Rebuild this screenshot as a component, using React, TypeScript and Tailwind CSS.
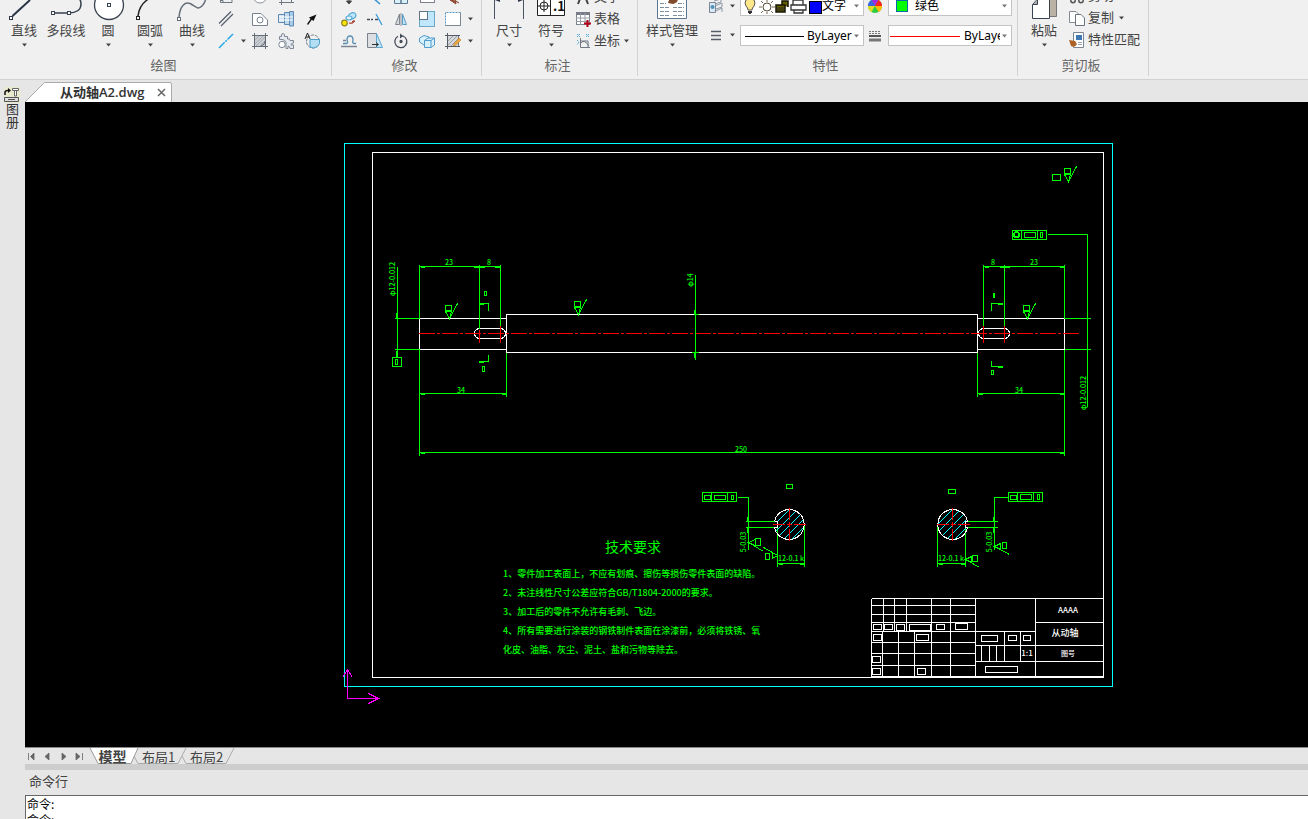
import type { ReactNode } from "react";

const DRAW_TOOLS: { label: string; menu: boolean; icon: ReactNode }[] = [
  {
    label: "直线",
    menu: true,
    icon: (
      <g stroke="#2b3546" fill="none">
        <path d="M9.500 16L27 0" strokeWidth="2" />
        <rect x="6.500" y="16.500" width="3" height="3" fill="#fff" />
      </g>
    ),
  },
  {
    label: "多段线",
    menu: false,
    icon: (
      <g stroke="#39424f" fill="none">
        <path d="M8 13H24C31 13 36 10 36 4Q36 -2 30 -5" strokeWidth="1.500" />
        <rect x="6.500" y="11.500" width="3" height="3" fill="#fff" />
        <rect x="22.500" y="11.500" width="3" height="3" fill="#fff" />
      </g>
    ),
  },
  {
    label: "圆",
    menu: true,
    icon: (
      <g stroke="#39424f">
        <circle cx="22" cy="5" r="14.500" fill="#fff" strokeWidth="1.300" />
        <rect x="20.500" y="3.500" width="3" height="3" fill="#fff" />
      </g>
    ),
  },
  {
    label: "圆弧",
    menu: true,
    icon: (
      <g stroke="#222" fill="none">
        <path d="M9 16Q10 6 18 0L24 -4" strokeWidth="1.500" />
        <rect x="7.500" y="16.500" width="3" height="3" fill="#fff" />
      </g>
    ),
  },
  {
    label: "曲线",
    menu: true,
    icon: (
      <g stroke="#666e79" fill="none">
        <path d="M8 17C9 6 14 1 20 4C25 7 27 10 31 6Q34 3 35 -2" strokeWidth="1.500" />
        <rect x="6.500" y="17.500" width="3" height="3" fill="#fff" />
      </g>
    ),
  },
];

const DRAW_ROWS: { name: string; icon: ReactNode }[][] = [
  [
    { name: "矩形", icon: <path d="M2.500 0V13.500H14V4M2 11.500H5V14" fill="none" stroke="#6f7682" /> },
    { name: "椭圆", icon: <ellipse cx="8" cy="9" rx="6" ry="5" fill="#fff" stroke="#8a909a" /> },
    { name: "构造线", icon: <path d="M3.500 5V16M13.500 8V14M1 13.500H16" fill="none" stroke="#6f7682" /> },
  ],
  [
    { name: "双线", icon: <path d="M1 12.500L13 .5M3 15L15 3" fill="none" stroke="#596070" strokeWidth="1.300" /> },
    {
      name: "区域",
      icon: (
        <g fill="#fff" stroke="#7b8390">
          <path d="M.5 2.500H9L15.500 9V14.500H.5Z" />
          <circle cx="8" cy="9" r="3" />
        </g>
      ),
    },
    {
      name: "轴",
      icon: (
        <g stroke="#5d89b3">
          <path d="M.5 3.500H6.500V11.500H.5Z" fill="#d5e5f3" />
          <path d="M6.500 1.500H11.500V13.500H6.500Z" fill="#c2daee" />
          <path d="M11.500 .5H15.500V15H11.500Z" fill="#a7cbe8" />
          <path d="M1 6H15M1 9H15" stroke="#fff" />
        </g>
      ),
    },
    { name: "箭头", icon: <path d="M12.500 3.500L9.500 10L7.800 8.700L4 14L3 13L6.500 8L5 6.500Z" fill="#111" /> },
  ],
  [
    { name: "中心线", icon: <path d="M1 15L15 1" fill="none" stroke="#29a9e6" strokeWidth="1.500" strokeDasharray="8 1 2 1" /> },
    {
      name: "填充",
      icon: (
        <g stroke="#7c828c">
          <rect x="2.500" y="2.500" width="11" height="11" fill="#c9ccd1" />
          <path d="M3 7L7 3M3 11L11 3M4 13L13 4M8 13L13 8" stroke="#a8acb3" />
          <path d="M2.500 0V16M13.500 0V16M0 2.500H16M0 13.500H16M9 13Q13 12 13 8" fill="none" stroke="#666c76" />
        </g>
      ),
    },
    {
      name: "零件库",
      icon: (
        <g fill="#e6eaf0" stroke="#7d8793">
          <path d="M1.500 6.500V3.500H3.500Q3 .5 5 .5Q7 .5 6.500 3.500H9.500V6Q12 5 12 7.500H15.500V10Q13 10 13 12H15.500V15.500H12Q12 13 10 13V15.500H8V9.500Q7 6.500 4 6.500Z" />
          <circle cx="4" cy="11.500" r="3.200" fill="#fff" />
        </g>
      ),
    },
    {
      name: "局部放大",
      icon: (
        <g fill="none" stroke="#707985">
          <circle cx="9" cy="8.500" r="6.500" strokeDasharray="3 1" />
          <path d="M6 6.500H15.500A6.500 6.500 0 0 1 6 14Z" fill="#b4def3" stroke="#4d9fc8" />
          <path d="M1 6L3.500 0L6 6M2 4H5" stroke="#222" />
        </g>
      ),
    },
  ],
];

const MODIFY_ROWS: { name: string; icon: ReactNode }[][] = [
  [
    { name: "移动", icon: <path d="M8 4V14M5.500 12H10.500L8 15Z" fill="#444" stroke="#444" /> },
    { name: "修剪", icon: <path d="M6 9L13 15" stroke="#3692d1" strokeWidth="1.500" /> },
    { name: "阵列", icon: <path d="M1.500 4.500H8V14.500H1.500ZM8 4.500H14.500V14.500H8Z" fill="#d9effa" stroke="#5c7790" /> },
    { name: "拉伸", icon: <rect x="1.500" y="2.500" width="14" height="11" fill="#fff" stroke="#7c828c" /> },
    { name: "清理", icon: <path d="M7 8L11 9L10 12L14 14M5 11L10 12L11 15Z" fill="#a75538" stroke="#8b4530" /> },
  ],
  [
    {
      name: "复制",
      icon: (
        <g strokeWidth="1.200">
          <ellipse cx="11" cy="5" rx="4" ry="3" fill="#bfe6fa" stroke="#58a9d4" transform="rotate(-30 11 5)" />
          <ellipse cx="8" cy="7" rx="3" ry="2" fill="#dff3fc" stroke="#58a9d4" />
          <circle cx="3.500" cy="12" r="2.800" fill="#ffe500" stroke="#8c8326" />
          <path d="M8 12Q13 13 13 9M11 10.500H14" fill="none" stroke="#a83b30" />
        </g>
      ),
    },
    {
      name: "延伸",
      icon: <g strokeWidth="1.300"><path d="M0 8.500H6M8 8.500H12" stroke="#444b55" strokeDasharray="3 1" /><path d="M9 3L15 14" stroke="#3d9ada" /></g>,
    },
    {
      name: "镜像",
      icon: <g><path d="M6.500 3V13.500H2.500Z" fill="#d7dade" stroke="#7e858f" /><path d="M9.500 3V13.500H13.500Z" fill="#bfe2f5" stroke="#5b9dc5" /><path d="M8 2V15" stroke="#8a929c" /></g>,
    },
    {
      name: "缩放",
      icon: <g><rect x=".5" y=".5" width="15" height="15" fill="#bfe6fa" stroke="#6aa7c8" /><rect x=".5" y=".5" width="8" height="8" fill="#fff" stroke="#637384" /></g>,
    },
    {
      name: "选择框",
      icon: <g><rect x=".5" y="1.500" width="15" height="13" fill="#fff" stroke="#7e8793" /><path d="M.5 14V1.500H15.500" fill="none" stroke="#8fd0f4" strokeDasharray="2 1" /></g>,
    },
  ],
  [
    {
      name: "偏移",
      icon: <g fill="none"><path d="M2 10.500H5.500Q7.500 10 6 7Q6 3 9 3Q12 3 12 7Q11 10.500 13 10.500H15" stroke="#5a8fb2" strokeWidth="1.300" /><path d="M0 13.500H16M2 7.500H5" stroke="#7c8793" strokeWidth="1.300" /></g>,
    },
    {
      name: "倾斜",
      icon: <g><path d="M.5 .5H9.500V14.500H.5Z" fill="#dcdee1" stroke="#7c828c" /><path d="M9.500 .5L15.500 14.500H9.500Z" fill="#bfe6fa" stroke="#63a6cc" /><path d="M5 11.500H11M9 9.500L11.500 11.500L9 13.500" fill="none" stroke="#333" /></g>,
    },
    {
      name: "旋转",
      icon: <g fill="none" stroke="#454d58" strokeWidth="1.300"><circle cx="8" cy="8.500" r="1" fill="#454d58" /><path d="M10 3A6 6 0 1 1 5 3.300" /><path d="M7 .5L10.500 3L7 5.500Z" fill="#454d58" stroke="none" /></g>,
    },
    {
      name: "三维阵列",
      icon: <g fill="#d7f0fc" stroke="#519ccc"><path d="M.5 5L5 2.500L10 4V10L5 12L.5 9Z" /><path d="M5.500 7.500L9 5H15.500V12L12 14.500H5.500ZM5.500 7.500H12V14.500M12 7.500L15.500 5" /></g>,
    },
    {
      name: "编辑填充",
      icon: <g><rect x="2.500" y="2.500" width="11" height="11" fill="#d6d8dc" stroke="#70767f" /><path d="M3 8L8 3M3 12L12 3M6 13L13 6" stroke="#9a9ea5" /><path d="M2.500 0V16M0 2.500H15M0 13.500H15" stroke="#555b65" /><path d="M9 11L14 5L16 7L11 12L8.500 13Z" fill="#edaa3d" stroke="#b8741b" strokeWidth=".5" /></g>,
    },
  ],
];

function Arrow({ light = false }: { light?: boolean }) {
  return (
    <svg className="h-[4px] w-[5px] shrink-0" viewBox="0 0 5 4">
      <path d="M0 .5H5L2.500 3.500Z" fill={light ? "#777" : "#444"} />
    </svg>
  );
}

function MenuButton({ label }: { label: string }) {
  return (
    <button aria-label={label} className="flex h-[22px] w-2 items-center justify-center">
      <Arrow />
    </button>
  );
}

function BigButton({ label, menu = true, wide = false, children }: { label: string; menu?: boolean; wide?: boolean; children: ReactNode }) {
  return (
    <button className={`flex shrink-0 flex-col items-center ${wide ? "w-[60px]" : "w-[42px]"}`}>
      <svg className="h-8 w-full" viewBox={wide ? "0 -11 60 32" : "0 -11 42 32"}>{children}</svg>
      <span className="h-5 whitespace-nowrap leading-[18px]">{label}</span>
      <span className="flex h-[11px] items-start pt-[2px]">{menu && <Arrow />}</span>
    </button>
  );
}

function SmallButton({ name, children, text }: { name: string; children: ReactNode; text?: boolean }) {
  return (
    <button aria-label={name} className={`flex h-[22px] items-center ${text ? "gap-[3px]" : "w-[26px] justify-center"}`}>
      <svg className="size-4 shrink-0" viewBox="0 0 16 16">{children}</svg>
      {text && <span className="h-5 whitespace-nowrap leading-[18px]">{name}</span>}
    </button>
  );
}

function Group({ title, children, className, inset }: { title: string; children: ReactNode; className: string; inset: string }) {
  return (
    <section className={`flex h-[76px] shrink-0 flex-col justify-end border-r border-[#d2d2d2] ${className}`}>
      <div className={`flex items-end ${inset}`}>{children}</div>
      <h2 className="h-6 pr-1 text-center leading-[26px] text-[#666]">{title}</h2>
    </section>
  );
}

function Combo({ label, value, children }: { label: string; value: string; children: ReactNode }) {
  return (
    <div className="flex h-[21px] w-[124px] items-center border border-[#c3c3c3] bg-white pr-1 text-xs text-black">
      {children}
      <select aria-label={label} className="h-full min-w-0 flex-1 appearance-none overflow-hidden bg-transparent font-['Noto_Sans','Noto_Sans_CJK_SC',sans-serif]">
        <option>{value}</option>
      </select>
      <span className="pl-[2px]"><Arrow light /></span>
    </div>
  );
}

function Ribbon() {
  return (
    <header className="flex h-20 shrink-0 overflow-hidden border-b border-[#d2d2d2] bg-[#f0f0f0]">
      <Group title="绘图" className="w-[332px]" inset="pl-[3px]">
        {DRAW_TOOLS.map((tool) => (
          <BigButton key={tool.label} label={tool.label} menu={tool.menu}>{tool.icon}</BigButton>
        ))}
        <div>
          {DRAW_ROWS.map((row, i) => (
            <div key={i} className="flex">
              {row.map((tool, col) => (
                <div key={tool.name} className="flex">
                  <SmallButton name={tool.name}>{tool.icon}</SmallButton>
                  {col === 0 && (i === 2 ? <MenuButton label="中心线选项" /> : <span className="w-2" />)}
                </div>
              ))}
            </div>
          ))}
        </div>
      </Group>

      <Group title="修改" className="w-[150px]" inset="pl-1">
        <div>
          {MODIFY_ROWS.map((row, i) => (
            <div key={i} className="flex">
              {row.map((tool) => (
                <SmallButton key={tool.name} name={tool.name}>{tool.icon}</SmallButton>
              ))}
              {i > 0 && <MenuButton label="更多修改" />}
            </div>
          ))}
        </div>
      </Group>

      <Group title="标注" className="w-[156px]" inset="pl-[6px]">
        <BigButton label="尺寸">
          <path d="M6.500 -8V19M35.500 -8V19" stroke="#4b5464" />
          <path d="M7 0L12 -2V2ZM35 0L30 -2V2Z" fill="#2b3546" />
        </BigButton>
        <BigButton label="符号">
          <g fill="#fff" stroke="#222">
            <path d="M7.500 -8H34.500V15.500H7.500ZM20.500 -8V15.500" />
            <circle cx="14" cy="6" r="4" />
            <path d="M8 6H20M14 0V12" />
          </g>
          <text x="23" y="11" className="text-[13px] font-bold" fill="#111">.1</text>
        </BigButton>
        <div className="pl-[3px]">
          <SmallButton name="文字" text>
            <path d="M3 15L8 2L13 15M5 10H11" fill="none" stroke="#444" strokeWidth="2" />
          </SmallButton>
          <SmallButton name="表格" text>
            <rect x="1.500" y="1.500" width="13" height="12" fill="#fff" stroke="#7c828c" />
            <path d="M1 2.500H15" stroke="#777d87" strokeWidth="3" />
            <path d="M5.500 2V14M10 2V14M1 7H15M1 10.500H15" stroke="#9a9fa7" />
            <path d="M12.500 9V16M9 12.500H16" stroke="#b00018" strokeWidth="2" />
          </SmallButton>
          <div className="flex gap-[2px]">
            <SmallButton name="坐标" text>
              <path d="M5.500 5V14.500H15M5 11Q9 5 14 13M5 8H13V14" fill="none" stroke="#717984" />
              <path d="M2 7L4 9L2 12M2 1L5 4M5 1L2 4M11 1L14 4M14 1L11 4" fill="none" stroke="#4ea7d8" strokeDasharray="2 1" />
            </SmallButton>
            <MenuButton label="坐标选项" />
          </div>
        </div>
      </Group>

      <Group title="特性" className="w-[380px]" inset="pl-1">
        <BigButton label="样式管理" wide>
          <path d="M15.500 -8V18.500H44.500V-8" fill="#fff" stroke="#5a7592" />
          <path d="M18 3.500H24M18 7.500H28M18 11.500H28M18 15.500H28M31 7.500H42M31 11.500H42M31 15.500H42M36 3.500H42" stroke="#7d8ea1" strokeDasharray="4 1" />
          <path d="M26 3Q28 -5 35 -4Q38 2 31 4Z" fill="#804b2c" />
        </BigButton>
        <div className="flex gap-1">
          <div className="flex w-[34px] flex-col">
            <div className="flex h-[30px] items-center justify-between pl-[6px]">
              <svg className="size-4" viewBox="0 0 16 16">
                <path d="M1.500 4.500H7.500V14.500H1.500Z" fill="#dfe9f2" stroke="#76879a" />
                <circle cx="4.500" cy="9" r="2" fill="#4c90bd" />
                <path d="M6 3L13 1V4L7 6M7 8L14 5V9L8 11M8 13L14 10V14" fill="none" stroke="#8d98a5" />
              </svg>
              <MenuButton label="图层选项" />
            </div>
            <div className="flex h-[28px] items-center justify-between pl-[6px]">
              <svg className="size-4" viewBox="0 0 16 16">
                <path d="M3 4.500H13M3 8.500H13M3 12.500H13" stroke="#555d69" strokeWidth="1.500" />
              </svg>
              <MenuButton label="线宽选项" />
            </div>
          </div>
          <div className="flex flex-col justify-end gap-[9px] pb-[6px]">
            <Combo label="图层" value="文字">
              <svg className="ml-[2px] h-4 w-[79px] shrink-0" viewBox="0 0 79 16">
                <path d="M5 12Q5 10 3 8Q1 5 3 2Q7 -2 11 2Q13 5 11 8Q9 10 9 12Z" fill="#ffe88a" stroke="#555" />
                <path d="M5 14H9M6 16H8" stroke="#333" strokeWidth="2" />
                <circle cx="24" cy="9" r="4" fill="#fff" stroke="#554a38" />
                <path d="M24 1V4M24 14V16M16 9H19M29 9H32M18 3L20 5M28 13L30 15M30 3L28 5M20 13L18 15" stroke="#76684d" />
                <path d="M33 7H42V14H33ZM39 7V3H45V9" fill="#675e00" stroke="#171500" strokeWidth="1.500" />
                <path d="M33 10H42M33 12H42" stroke="#222" />
                <path d="M50 7V2H60V7M48 7H63V12H48ZM51 12H60V15H51Z" fill="#fff" stroke="#333" strokeWidth="1.300" />
                <rect x="66.500" y="3.500" width="12" height="12" fill="#00f" stroke="#000" />
              </svg>
            </Combo>
            <Combo label="线型" value="ByLayer">
              <svg className="mr-[3px] ml-1 h-4 w-[59px] shrink-0" viewBox="0 0 59 16"><path d="M0 8.500H59" stroke="#000" /></svg>
            </Combo>
          </div>
          <svg className="h-[61px] w-4" viewBox="0 0 16 61">
            <circle cx="7" cy="15" r="7" fill="#2ecc40" />
            <path d="M7 15L3.500 9A7 7 0 0 1 10.500 9Z" fill="#a42be6" />
            <path d="M7 15L10.500 9A7 7 0 0 1 14 15Z" fill="#f22" />
            <path d="M7 15H14A7 7 0 0 1 10.500 21Z" fill="#fb0" />
            <path d="M7 15L3.500 21A7 7 0 0 1 0 15Z" fill="#e2df20" />
            <path d="M7 15H0A7 7 0 0 1 3.500 9Z" fill="#3b63e8" />
            <path d="M1 40.500H13M1 42.500H13" stroke="#777" strokeDasharray="2 1" />
            <path d="M1 45H13" stroke="#555" strokeWidth="2" />
            <path d="M1 49H13" stroke="#777" strokeWidth="3" />
          </svg>
          <div className="flex flex-col justify-end gap-[9px] pb-[6px]">
            <Combo label="颜色" value="绿色">
              <span className="mx-[7px] size-3 shrink-0 border border-[#0d68aa] bg-[#0f0]" />
            </Combo>
            <Combo label="线宽" value="ByLayer">
              <svg className="mr-1 ml-px h-4 w-[70px] shrink-0" viewBox="0 0 70 16"><path d="M0 8.500H70" stroke="#f00" /></svg>
            </Combo>
          </div>
        </div>
      </Group>

      <Group title="剪切板" className="w-[131px]" inset="pl-[5px]">
        <BigButton label="粘贴">
          <path d="M20 -8H33.500V16.500H20Z" fill="#bbb1a5" stroke="#777" />
          <path d="M9.500 4.500L14.500 -1V-8H26.500V18.500H9.500Z" fill="#fff" stroke="#39424f" />
          <path d="M10 4.500H14.500V0" fill="#aaa" stroke="#39424f" />
        </BigButton>
        <div className="pb-px pl-1">
          <SmallButton name="剪切" text>
            <path d="M5 11L12 2M11 11L4 2" stroke="#555" strokeWidth="1.500" />
            <circle cx="4" cy="12.500" r="2.200" fill="none" stroke="#555" strokeWidth="1.500" />
            <circle cx="12" cy="12.500" r="2.200" fill="none" stroke="#555" strokeWidth="1.500" />
          </SmallButton>
          <div className="flex gap-[3px]">
            <SmallButton name="复制" text>
              <path d="M.5 1.500H7L9.500 4V12.500H.5Z" fill="#fff" stroke="#858b94" />
              <path d="M6.500 4.500H12L15.500 8V15.500H6.500Z" fill="#fff" stroke="#6d747e" />
            </SmallButton>
            <MenuButton label="复制选项" />
          </div>
          <SmallButton name="特性匹配" text>
            <path d="M4.500 .5H14.500V15.500H4.500Z" fill="#fff" stroke="#7c8795" />
            <rect x="7" y="3" width="6" height="5" fill="#3f79b4" />
            <path d="M9 10.500H13M9 12.500H13" stroke="#99a1ac" />
            <path d="M0 8L6 9L8 12Q6 16 2 14Z" fill="#ad6327" />
          </SmallButton>
        </div>
      </Group>
    </header>
  );
}

// Surface roughness mark, (x, y) is the tip that touches the part.
function Roughness({ x, y }: { x: number; y: number }) {
  return <path d={`M${x - 4} ${y - 13}h6v5h-6zM${x - 4} ${y - 7}h6l-2 7l-4 -7M${x} ${y}l8 -15`} />;
}

const NOTES = [
  "1、零件加工表面上，不应有划痕、擦伤等损伤零件表面的缺陷。",
  "2、未注线性尺寸公差应符合GB/T1804-2000的要求。",
  "3、加工后的零件不允许有毛刺、飞边。",
  "4、所有需要进行涂装的钢铁制件表面在涂漆前，必须将铁锈、氧",
  "化皮、油脂、灰尘、泥土、盐和污物等除去。",
];

// Empty text cells of the title block: x, y, width, height
const CELLS = [
  [873, 624, 8, 5], [884, 624, 8, 5], [896, 624, 8, 6], [909, 624, 21, 6], [936, 624, 8, 5],
  [955, 623, 12, 6], [873, 634, 8, 6], [916, 634, 12, 6], [872, 656, 8, 6], [872, 668, 8, 6],
  [917, 668, 8, 6], [981, 635, 16, 6], [1008, 635, 8, 5], [1023, 635, 7, 5], [985, 666, 32, 6],
];

const DIM_TEXTS = [
  { x: 449, y: 265, text: "23" },
  { x: 489, y: 265, text: "8" },
  { x: 993, y: 265, text: "8" },
  { x: 1034, y: 265, text: "23" },
  { x: 461, y: 393, text: "34" },
  { x: 1019, y: 393, text: "34" },
  { x: 741, y: 452, text: "250" },
  { x: 791, y: 561, text: "12-0.1 k" },
  { x: 951, y: 561, text: "12-0.1 k" },
];

const SIDE_TEXTS = [
  { x: 395, y: 279, text: "φ12-0.012" },
  { x: 693, y: 280, text: "φ14" },
  { x: 1086, y: 393, text: "φ12-0.012" },
  { x: 746, y: 542, text: "5-0.03" },
  { x: 992, y: 542, text: "5-0.03" },
];

function Drawing() {
  return (
    <svg
      role="img"
      aria-label="从动轴A2.dwg"
      className="min-h-0 w-full flex-1 bg-black font-['Noto_Sans_CJK_SC',sans-serif]"
      viewBox="25 102 1283 645"
    >
      <defs>
        <clipPath id="section-left"><path d="M777 521V527H774A15 15 0 1 0 774 521Z" /></clipPath>
        <clipPath id="section-right"><path d="M965 521V527H967A15 15 0 1 1 967 521Z" /></clipPath>
      </defs>
      <g transform="translate(.5 .5)" fill="none" shapeRendering="crispEdges">
        <rect x="344" y="143" width="768" height="543" stroke="#0ff" />
        <g stroke="#fff">
          <rect x="372" y="152" width="731" height="525" />
          <path d="M506 318H419V349H506M506 314H977V352H506ZM977 318H1064V349H977" />
          <rect x="474" y="328" width="31" height="10" rx="5" />
          <rect x="978" y="328" width="31" height="10" rx="5" />
        </g>

        <path d="M418 333H1079" stroke="#f00" strokeDasharray="16 2 3 2" />
        <path d="M479 329V342M500 325V342M983 325V342M1004 325V342" stroke="#f00" />

        <g stroke="#0f0">
          {/* horizontal dimensions */}
          <path d="M419 266H500M419 264V318M479 264V328M500 264V325" />
          <path d="M983 266H1064M983 264V325M1004 264V325M1064 264V318" />
          <path d="M419 393H506M506 352V396M419 349V455M977 393H1064M977 352V396M1064 349V455M419 452H1064" />
          <path d="M420 267H424M473 267H484M494 267H499M984 267H988M999 267H1009M1059 267H1063M420 394H424M501 394H505M978 394H982M1059 394H1063M420 453H424M1059 453H1063" />
          {/* diameters */}
          <path d="M397 266V357M396 312V318M396 350V356M394 318H419M394 349H419M392 357H401V366H392ZM395 359H397V364H395Z" />
          <path d="M695 274V359M694 309V314M694 352V357M693 314H698M691 352H698" />
          <path d="M1064 318H1090M1064 349H1090M1087 234V406M1047 234H1087" />
          {/* section marks */}
          <path d="M488 310V303H478M478 304H483M484 291H486V295H484ZM488 354V361H478M478 362H483M482 366H484V371H482Z" />
          <path d="M991 310V303H1002M997 304H1002M993 293H994V297H993ZM991 360V366H1002M997 367H1002M991 370H993V374H991Z" />
          {/* tolerance frames */}
          <path d="M1012 230H1046V239H1012ZM1021 230V239M1037 230V239M1024 232H1035V237H1024ZM1040 232H1042V237H1040Z" />
          <circle cx="1016" cy="234" r="3" />
          <circle cx="1016" cy="234" r="2" />
          <path d="M702 492H736V501H702ZM711 492V501M727 492V501M704 495H710V499H704ZM714 495H725V499H714ZM731 495H733V499H731ZM737 497H748V549" />
          <path d="M1008 492H1042V501H1008ZM1017 492V501M1033 492V501M1010 495H1016V499H1010ZM1020 494H1031V499H1020ZM1037 494H1039V499H1037ZM1008 497H994V549" />
          <path d="M786 484H792V488H786ZM948 489H955V493H948ZM1052 174H1060V180H1052Z" />
          {/* keyway sections */}
          <path d="M745 521H774M745 527H774M747 516V521M747 527V532M777 527V566M804 524V566M777 563H804M778 564H782M799 564H803" />
          <path d="M967 521H997M967 527H997M993 516V521M993 527V532M937 524V566M965 527V566M937 563H965M938 564H942M960 564H964" />
          <path d="M748 542L755 539V545ZM755 538H760V545H755ZM748 542L763 551M763 547L777 555M777 555L772 552V558ZM765 553H769V559H765Z" />
          <path d="M994 546L1000 543V549ZM1002 542H1006V548H1002ZM994 546L1009 554M965 559L971 556V562ZM972 555H977V561H972ZM965 559L979 567" />
          <Roughness x={449} y={318} />
          <Roughness x={578} y={314} />
          <Roughness x={1027} y={318} />
          <Roughness x={1068} y={181} />
        </g>

        <path clipPath="url(#section-left)" d="M758 540L790 508M766 540L798 508M774 540L806 508M782 540L814 508M790 540L822 508" stroke="#0ff" />
        <path clipPath="url(#section-right)" d="M921 540L953 508M929 540L961 508M937 540L969 508M945 540L977 508M953 540L985 508" stroke="#0ff" />
        <path d="M774 521H777V527H774A15 15 0 1 0 774 521M967 521H965V527H967A15 15 0 1 1 967 521" stroke="#fff" />
        <path d="M772 524H807M789 507V541M936 524H970M952 507V541" stroke="#f00" strokeDasharray="12 2 5 2" />

        {/* title block */}
        <g stroke="#fff">
          <path d="M871 598H1103M871 598V677M883 598V631M894 598V631M906 598V631M931 598V677M950 598V677M975 598V677M1035 598V677" />
          <path d="M871 605H975M871 614H975M871 622H975M871 631H1035M871 642H975M871 653H975M871 665H975M871 676H1103" />
          <path d="M882 631V677M898 631V677M914 631V677M1004 631V661M1020 631V661M981 645V661M989 645V661M996 645V661M975 645H1103M975 661H1103M1035 622H1103" />
          {CELLS.map(([x, y, width, height]) => (
            <rect key={`${x}-${y}`} x={x} y={y} width={width} height={height} />
          ))}
        </g>

        <path d="M347 669V698H378M342 677L347 669L352 677M368 693L378 698L368 703" stroke="#f0f" />
      </g>

      <g fill="#0f0" textAnchor="middle" className="text-[7px] font-medium">
        {DIM_TEXTS.map((dim) => (
          <text key={`${dim.x}-${dim.y}`} x={dim.x} y={dim.y}>{dim.text}</text>
        ))}
        {SIDE_TEXTS.map((dim) => (
          <text key={`${dim.x}-${dim.y}`} transform={`translate(${dim.x} ${dim.y}) rotate(-90)`}>{dim.text}</text>
        ))}
      </g>
      <text x="633" y="552" textAnchor="middle" fill="#0f0" className="text-[14px]">技术要求</text>
      <g fill="#0f0" className="text-[9px] font-medium">
        {NOTES.map((note, i) => (
          <text key={note} x="503" y={577 + i * 19}>{note}</text>
        ))}
      </g>
      <g fill="#fff" textAnchor="middle" className="text-[9px] font-medium">
        <text x="1068" y="613" className="text-[8px]">AAAA</text>
        <text x="1065" y="636">从动轴</text>
        <text x="1068" y="656" className="text-[7px]">图号</text>
        <text x="1027" y="656" className="text-[8px]">1:1</text>
      </g>
    </svg>
  );
}

const NAV = [
  { name: "第一个", d: "M1.500 1V8M7 1V8L3.500 4.500Z" },
  { name: "上一个", d: "M6 1V8L2 4.500Z" },
  { name: "下一个", d: "M3 1V8L7 4.500Z" },
  { name: "最后一个", d: "M1 1V8L5 4.500ZM7.500 1V8" },
];

function LayoutTabs() {
  return (
    <nav className="flex h-[17px] shrink-0 items-stretch border-t border-[#888] bg-[#e6e6e6]">
      <div className="flex w-[65px] items-center gap-[7px] pl-[2px]">
        {NAV.map((item) => (
          <button key={item.name} aria-label={item.name} className="flex w-[9px] justify-center">
            <svg className="h-[9px] w-[9px]" viewBox="0 0 9 9"><path d={item.d} fill="#666" stroke="#666" strokeWidth=".8" /></svg>
          </button>
        ))}
      </div>
      {["模型", "布局1", "布局2"].map((name, i) => (
        <button key={name} className={`relative w-12 text-center text-[#444] ${i === 0 ? "pr-[3px] text-sm leading-[13px] font-bold" : "pr-[7px] text-[13px] leading-[13px]"}`}>
          <svg className="absolute inset-y-0 left-0 h-4 w-[50px] overflow-visible" viewBox="0 0 50 16">
            {i === 0 ? (
              <path d="M0 0L8 15.500H41L48 0" fill="#fff" stroke="#999" />
            ) : (
              <path d="M-4 8L0 15.500H40L48 0" fill="none" stroke="#aaa" />
            )}
          </svg>
          <span className="relative">{name}</span>
        </button>
      ))}
    </nav>
  );
}

export default function App() {
  return (
    <div className="flex h-screen flex-col overflow-hidden bg-[#e6e6e6] font-['Noto_Sans_CJK_SC',sans-serif] text-[13px] text-[#444]">
      <Ribbon />
      <div className="flex min-h-0 flex-1">
        <aside className="w-[25px] shrink-0 pt-[7px]">
          <button className="flex flex-col items-center pl-1 text-[#333]">
            <svg className="h-4 w-4" viewBox="0 0 16 16">
              <rect width="16" height="16" fill="#e8e9cd" />
              <path d="M1 8V5.500Q1 3.500 4 3.500" fill="none" stroke="#111" strokeWidth="1.500" />
              <path d="M4 1L7 3.500L4 6Z" fill="#111" />
              <path d="M8.500 1.500H14.500V3.500H8.500ZM10.500 3.500H12.500V9H10.500Z" fill="#fff" stroke="#666" />
              <path d="M.5 10.500H14.500V14.500H.5ZM4 12.500H11" fill="#ddd" stroke="#555" />
            </svg>
            <span className="text-[13px] leading-4 [writing-mode:vertical-rl]">图册</span>
          </button>
        </aside>

        <main className="flex min-w-0 flex-1 flex-col">
          <div className="flex h-[22px] shrink-0 items-end">
            <div className="relative flex h-5 w-[147px] items-center pl-[35px] text-[#333]">
              <svg className="absolute inset-0 h-5 w-[147px]" viewBox="0 0 147 20">
                <path d="M0 20L19.500 .5H145Q146.500 .5 146.500 2V20" fill="#fff" stroke="#aaa" />
              </svg>
              <button className="relative whitespace-nowrap font-['Open_Sans','Noto_Sans_CJK_SC',sans-serif] text-[13px] leading-5 font-semibold">从动轴A2.dwg</button>
              <button aria-label="关闭" className="relative ml-auto mr-[6px]">
                <svg className="size-[9px]" viewBox="0 0 9 9"><path d="M1 1L8 8M8 1L1 8" stroke="#666" strokeWidth="1.500" /></svg>
              </button>
            </div>
          </div>
          <Drawing />
          <LayoutTabs />
          <div className="h-[6px] shrink-0 bg-[#cdcdcd]" />
          <label htmlFor="command" className="h-[25px] shrink-0 pl-1 leading-[22px]">命令行</label>
          <textarea
            id="command"
            className="h-6 shrink-0 resize-none overflow-hidden border-t border-l border-[#666] bg-white pl-px text-xs leading-4 text-black outline-none"
            defaultValue={"命令:\n命令:"}
          />
        </main>
      </div>
    </div>
  );
}
